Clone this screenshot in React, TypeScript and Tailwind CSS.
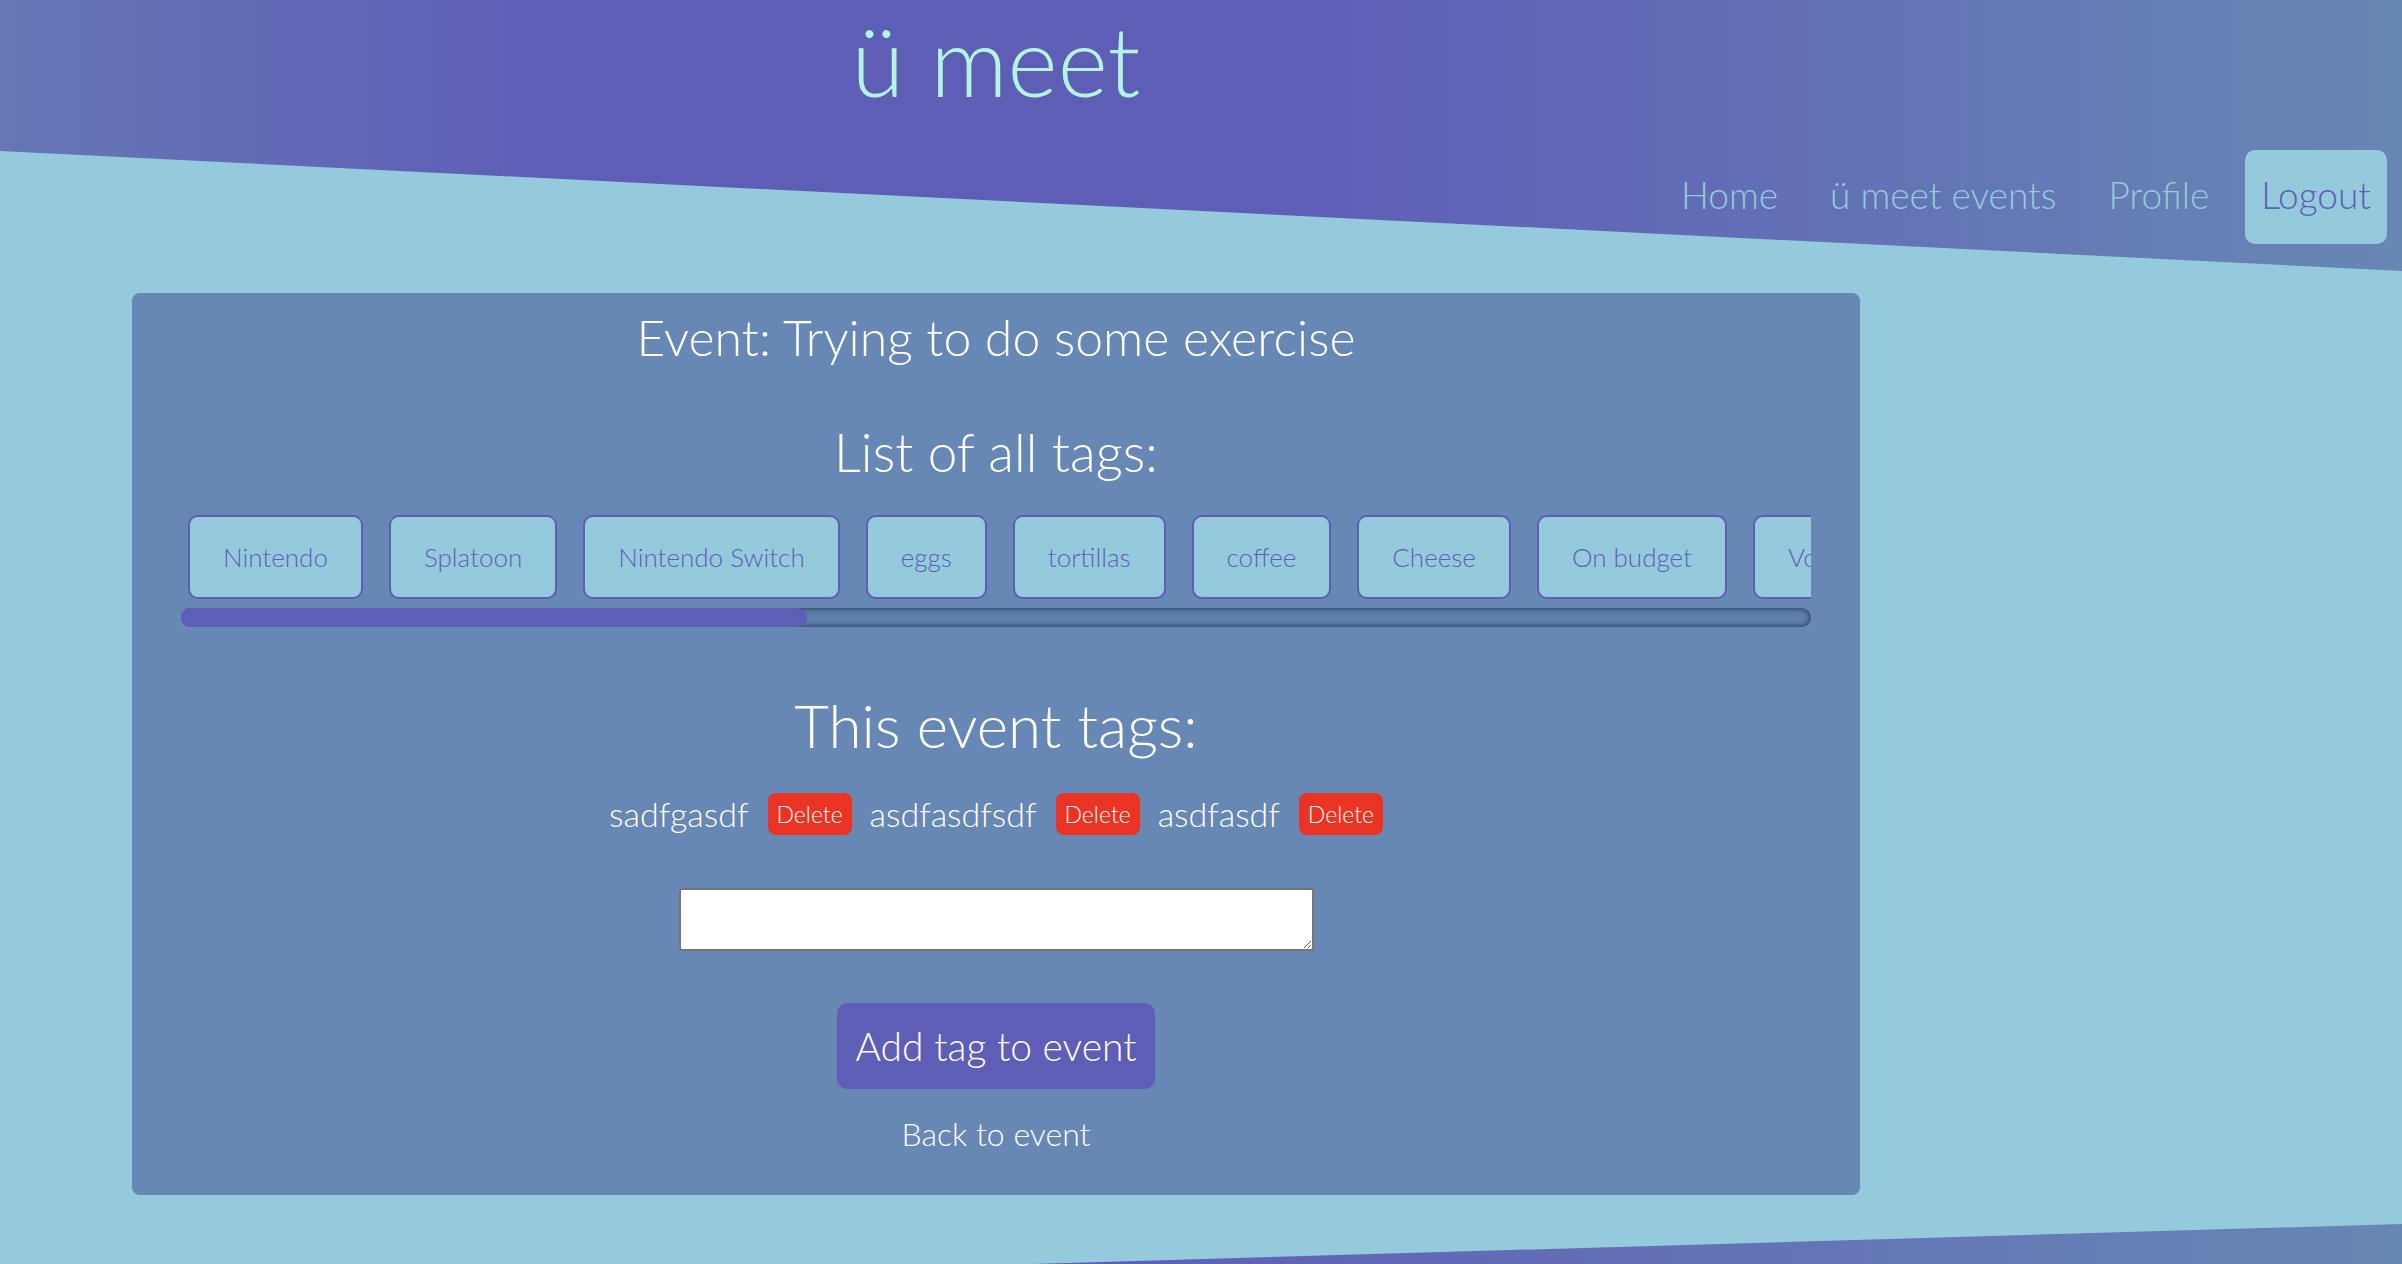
const allTags = [
  "Nintendo",
  "Splatoon",
  "Nintendo Switch",
  "eggs",
  "tortillas",
  "coffee",
  "Cheese",
  "On budget",
  "Volleyball",
];

const eventTags = ["sadfgasdf", "asdfasdfsdf", "asdfasdf"];

const font = "font-['Lato','Noto_Sans',sans-serif] font-light";

function Nav() {
  return (
    <nav className="flex items-center justify-end gap-[20px] pr-[15px]">
      {["Home", "ü meet events", "Profile"].map((l) => (
        <a key={l} href="#" className="px-[16px] pb-[4px] text-[37px] leading-[90px] text-[#94cadc]">
          {l}
        </a>
      ))}
      <a href="#" className="rounded-[10px] bg-[#94cadc] px-[16px] pb-[4px] text-[37px] leading-[90px] text-[#5f5eb7]">
        Logout
      </a>
    </nav>
  );
}

function TagStrip() {
  return (
    <div className="mt-[31px]">
      <div className="overflow-hidden">
        <div className="flex w-max gap-[26px] pl-[7px]">
          {allTags.map((t) => (
            <button
              key={t}
              className="h-[84px] shrink-0 rounded-[10px] border-2 border-[#5f5eb7] bg-[#94cadc] px-[33px] text-[26px] text-[#5f5eb7]"
            >
              {t}
            </button>
          ))}
        </div>
      </div>
      <div className="mt-[9px] h-[19px] rounded-full bg-[#5f7fad] shadow-[inset_0_0_6px_rgba(20,30,60,0.85)]">
        <div className="h-full w-[38.4%] rounded-full bg-[#5f5eb7]" />
      </div>
    </div>
  );
}

export default function App() {
  return (
    <div className={`relative min-h-screen overflow-hidden bg-[#94cadc] ${font}`}>
      {/* diagonal background bands */}
      <div className="absolute inset-x-0 top-0 h-[271px] bg-[linear-gradient(to_right,#6577b5_0%,#5f5eb7_22%,#5f5eb7_55%,#6787b4_100%)] [clip-path:polygon(0_0,100%_0,100%_100%,0_55.7%)]" />
      <div className="absolute inset-x-0 bottom-0 h-[40px] bg-[linear-gradient(to_right,#6577b5_0%,#5f5eb7_45%,#6787b4_100%)] [clip-path:polygon(43%_100%,100%_0,100%_100%)]" />

      <div className="relative">
        <header>
          <div className="ml-[132px] h-[150px] w-[1728px] text-center">
            <h1 className="text-[96px] leading-[120px] font-light text-[#b4f5e2]">ü meet</h1>
          </div>
          <Nav />
        </header>

        <main className="ml-[132px] mt-[49px] w-[1728px] rounded-[8px] bg-[#6787b4] px-[49px] pt-[14px] pb-[41px] text-center text-white">
          <h2 className="text-[50px] leading-[60px]">Event: Trying to do some exercise</h2>

          <h3 className="mt-[53px] text-[53px] leading-[64px]">List of all tags:</h3>

          <TagStrip />

          <h3 className="mt-[62px] text-[60px] leading-[72px]">This event tags:</h3>

          <div className="mt-[32px] flex items-center justify-center gap-[18px]">
            {eventTags.map((t) => (
              <div key={t} className="flex items-center gap-[19px]">
                <span className="text-[34px] leading-[42px]">{t}</span>
                <button className="h-[42px] w-[84px] rounded-[8px] bg-[#ea3323] text-[23px] text-white">
                  Delete
                </button>
              </div>
            ))}
          </div>

          <textarea className="mx-auto mt-[53px] block h-[63px] w-[635px] rounded-[3px] border-2 border-[#767676] bg-white" />

          <button className="mt-[52px] h-[86px] w-[318px] rounded-[10px] bg-[#5f5eb7] text-[39px] text-white">
            Add tag to event
          </button>

          <div className="mt-[25px]">
            <a href="#" className="text-[32px] leading-[40px] text-white">
              Back to event
            </a>
          </div>
        </main>
      </div>
    </div>
  );
}
